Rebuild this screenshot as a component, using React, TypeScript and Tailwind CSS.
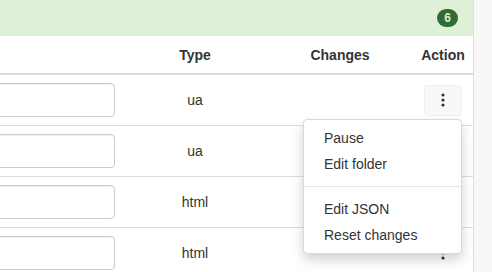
const rows = [
  { type: 'ua', open: true },
  { type: 'ua', open: false },
  { type: 'html', open: false },
  { type: 'html', open: false },
];

function Kebab() {
  return (
    <svg width="4" height="14" viewBox="0 0 4 14" className="text-[#333]">
      <circle cx="2" cy="2" r="1.6" fill="currentColor" />
      <circle cx="2" cy="7" r="1.6" fill="currentColor" />
      <circle cx="2" cy="12" r="1.6" fill="currentColor" />
    </svg>
  );
}

function ActionMenu() {
  return (
    <div className="absolute right-0 top-[calc(100%+3px)] z-10 w-[159px] rounded border border-[#d9d9d9] bg-white py-[5px] text-left shadow-[0_6px_12px_rgba(0,0,0,0.175)]">
      <div className="px-5 py-[3px] leading-5">Pause</div>
      <div className="px-5 py-[3px] leading-5">Edit folder</div>
      <div className="my-[9px] h-px bg-[#e5e5e5]" />
      <div className="px-5 py-[3px] leading-5">Edit JSON</div>
      <div className="px-5 py-[3px] leading-5">Reset changes</div>
    </div>
  );
}

export default function App() {
  return (
    <div className="flex h-[272px] w-[492px] overflow-hidden bg-[#f9f8f8] font-['Liberation_Sans',Arial,sans-serif] text-sm text-[#333]">
      <section className="w-[474px] shrink-0 border-r border-[#d6e9c6] bg-white">
        {/* panel heading */}
        <div className="flex h-9 items-center justify-end bg-[#dff0d8] px-[15px]">
          <span className="rounded-[10px] bg-[#336b35] px-[7px] py-[3px] text-xs font-bold leading-none text-[#dff0d8]">
            6
          </span>
        </div>

        {/* table header */}
        <div className="grid h-[39px] grid-cols-[125px_140px_150px_56px] items-center border-b-2 border-[#dddddd] font-bold">
          <div />
          <div className="text-center">Type</div>
          <div className="text-center">Changes</div>
          <div className="text-center">Action</div>
        </div>

        {rows.map((row, i) => (
          <div
            key={i}
            className="grid h-[51px] grid-cols-[125px_140px_150px_56px] items-center border-b border-[#dddddd]"
          >
            <div className="flex justify-end overflow-hidden pr-[10px]">
              <div className="h-[34px] w-[160px] shrink-0 rounded border border-[#cccccc] bg-white shadow-[inset_0_1px_1px_rgba(0,0,0,0.075)]" />
            </div>
            <div className="text-center">{row.type}</div>
            <div />
            <div className="flex justify-center">
              <div className="relative">
                <button
                  className={
                    row.open
                      ? 'flex h-[31px] w-[38px] items-center justify-center rounded border border-[#efefef] bg-[#f8f8f8]'
                      : 'flex h-[31px] w-[38px] items-center justify-center rounded border border-transparent'
                  }
                >
                  <Kebab />
                </button>
                {row.open && <ActionMenu />}
              </div>
            </div>
          </div>
        ))}
      </section>
    </div>
  );
}
